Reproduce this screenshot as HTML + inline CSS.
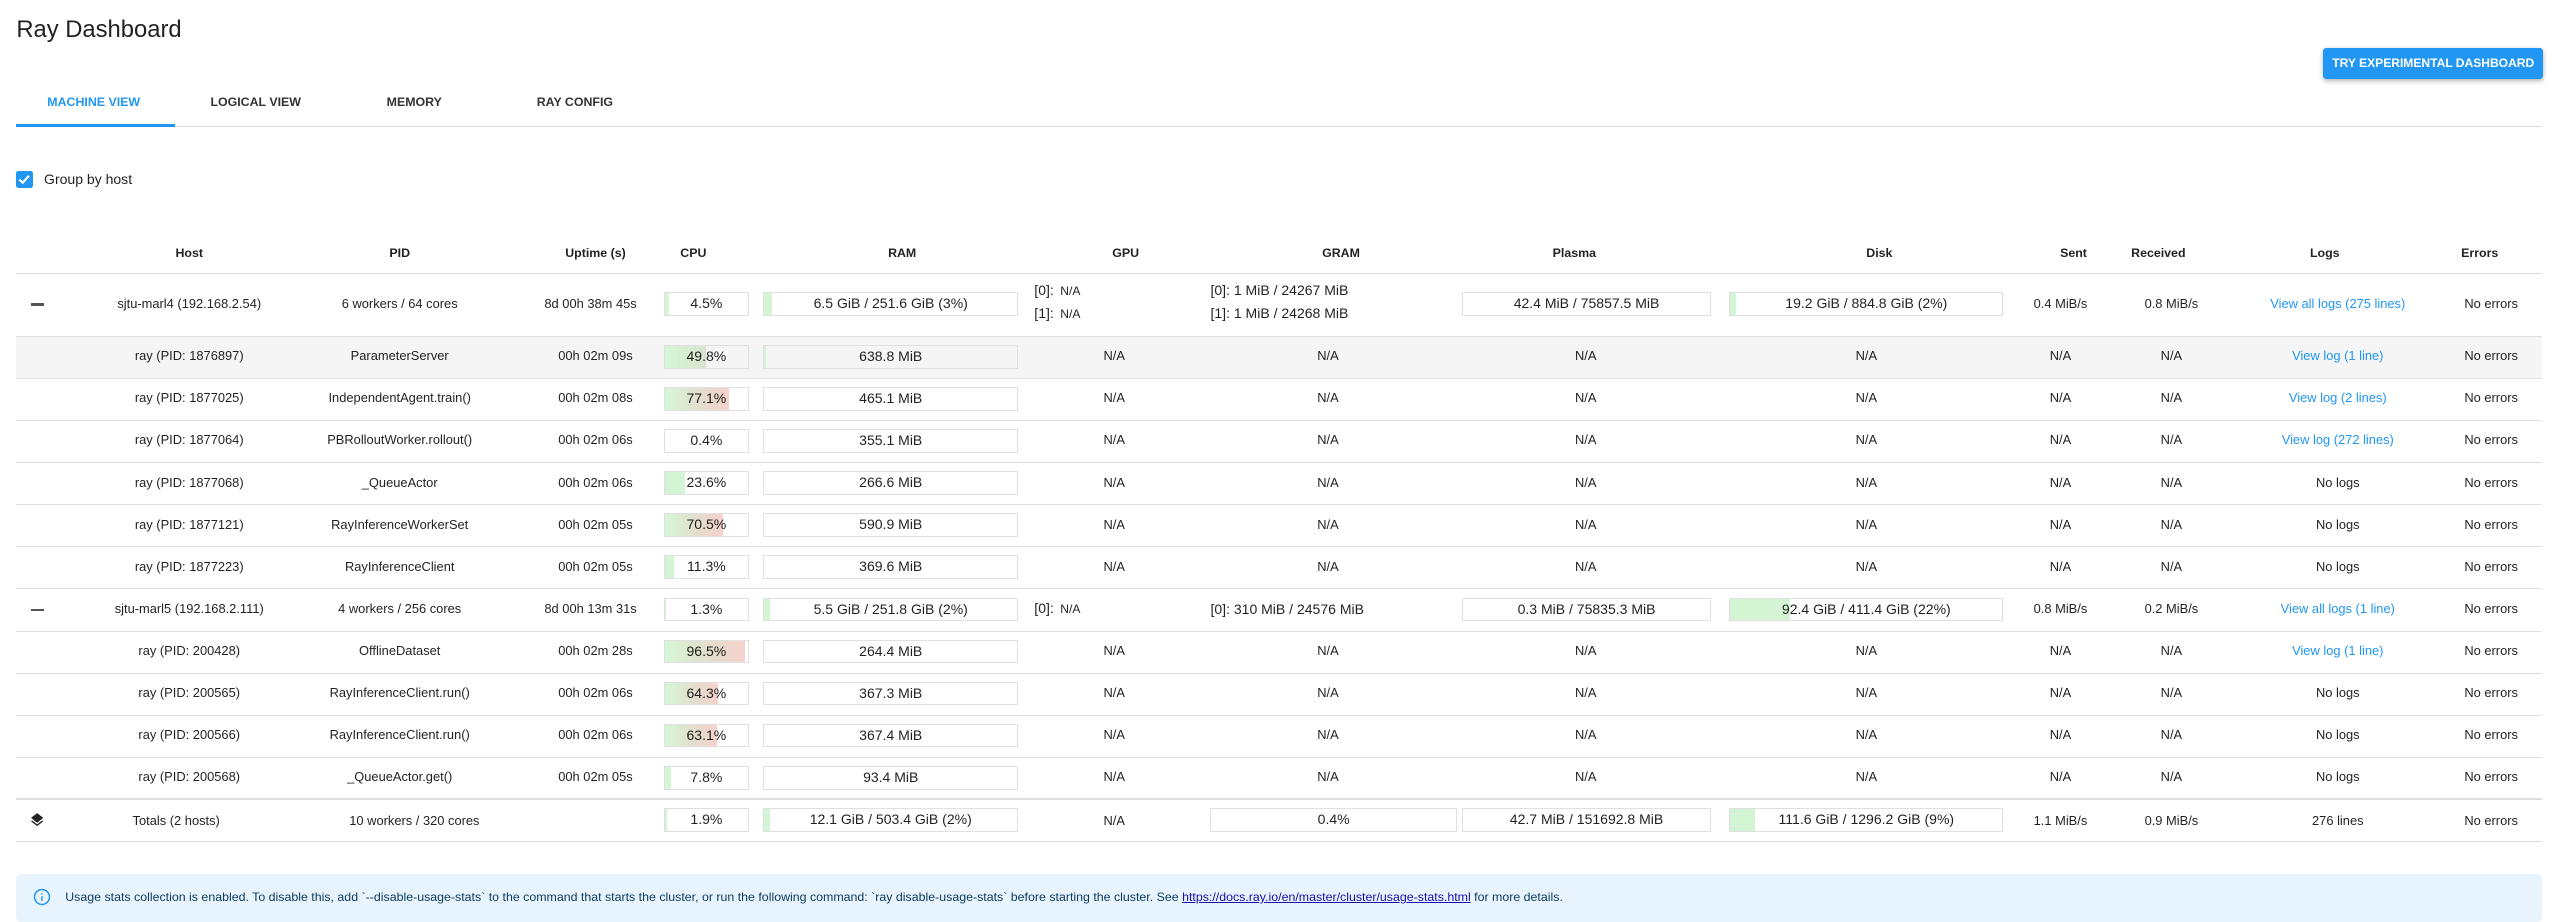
<!DOCTYPE html>
<html><head><meta charset="utf-8"><style>
html,body{margin:0;padding:0;background:#fff;}
body{width:1568px;height:565px;zoom:1.6314;position:relative;overflow:hidden;font-family:"Liberation Sans",sans-serif;color:rgba(0,0,0,0.87);}
.a{position:absolute;}
.t{position:absolute;white-space:nowrap;text-align:center;width:200px;margin-left:-100px;font-size:7.9px;line-height:10px;}
.row{position:absolute;left:10px;width:1548px;border-bottom:1px solid #e0e0e0;box-sizing:border-box;}
.box{position:absolute;height:14.5px;border:1px solid #e0e0e0;box-sizing:border-box;background:#fff;font-size:8.6px;line-height:12.5px;text-align:center;white-space:nowrap;overflow:hidden;}
.box .f{position:absolute;left:0;top:0;bottom:0;}
.box span{position:relative;}
.hd{font-weight:bold;font-size:7.6px;}
.link{color:#2196f3;}
.g{background:#d4f5d4;}
.cg{background:linear-gradient(to right,#d6f7d6,#e4dccd 60%,#f5d2cd);}
</style></head><body>

<div class="a" style="left:10px;top:9px;font-size:14.6px;line-height:18px;">Ray Dashboard</div>

<div class="a" style="left:1424px;top:29.4px;width:135px;height:19px;background:#2196f3;border-radius:2px;box-shadow:0 1px 3px rgba(0,0,0,0.3);color:#fff;font-size:7.4px;line-height:19px;text-align:center;font-weight:bold;white-space:nowrap;">TRY EXPERIMENTAL DASHBOARD</div>

<div class="a" style="left:10px;top:77px;width:1548px;height:1px;background:#e0e0e0;"></div>
<div class="a" style="left:10px;top:76px;width:97px;height:2px;background:#2196f3;"></div>
<div class="a" style="left:29px;top:58px;font-size:7.6px;font-weight:bold;color:#2196f3;">MACHINE VIEW</div>
<div class="a" style="left:129px;top:58px;font-size:7.6px;font-weight:bold;color:#333;">LOGICAL VIEW</div>
<div class="a" style="left:237px;top:58px;font-size:7.6px;font-weight:bold;color:#333;">MEMORY</div>
<div class="a" style="left:329px;top:58px;font-size:7.6px;font-weight:bold;color:#333;">RAY CONFIG</div>

<div class="a" style="left:10px;top:105px;width:10px;height:10px;background:#2196f3;border-radius:1.5px;"></div>
<svg class="a" style="left:10px;top:105px" width="10" height="10" viewBox="0 0 10 10"><path d="M2 5.2 L4.1 7.2 L8 2.9" stroke="#fff" stroke-width="1.3" fill="none"/></svg>
<div class="a" style="left:27px;top:105px;font-size:8.6px;line-height:10px;">Group by host</div>

<!-- header -->
<div class="row" style="top:140px;height:28px;"></div>
<div class="t hd" style="left:116px;top:150px;">Host</div>
<div class="t hd" style="left:245px;top:150px;">PID</div>
<div class="t hd" style="left:365px;top:150px;">Uptime (s)</div>
<div class="t hd" style="left:425px;top:150px;">CPU</div>
<div class="t hd" style="left:553px;top:150px;">RAM</div>
<div class="t hd" style="left:690px;top:150px;">GPU</div>
<div class="t hd" style="left:822px;top:150px;">GRAM</div>
<div class="t hd" style="left:965px;top:150px;">Plasma</div>
<div class="t hd" style="left:1152px;top:150px;">Disk</div>
<div class="t hd" style="left:1271px;top:150px;">Sent</div>
<div class="t hd" style="left:1323px;top:150px;">Received</div>
<div class="t hd" style="left:1425px;top:150px;">Logs</div>
<div class="t hd" style="left:1520px;top:150px;">Errors</div>

<!-- host 1 -->
<div class="row" style="top:168px;height:38.5px;"></div>
<div class="a" style="left:19px;top:186px;width:8px;height:1.3px;background:#555;"></div>
<div class="t" style="left:116px;top:181.5px;">sjtu-marl4 (192.168.2.54)</div>
<div class="t" style="left:245px;top:181.5px;">6 workers / 64 cores</div>
<div class="t" style="left:362px;top:181.5px;">8d 00h 38m 45s</div>
<div class="box" style="left:407px;top:179px;width:52px;"><div class="f g" style="width:4.5%"></div><span>4.5%</span></div>
<div class="box" style="left:468px;top:179px;width:156px;"><div class="f g" style="width:3%"></div><span>6.5 GiB / 251.6 GiB (3%)</span></div>
<div class="a" style="left:634px;top:173px;font-size:8.6px;line-height:10px;">[0]:<span style="font-size:7.4px;margin-left:4px;">N/A</span></div>
<div class="a" style="left:634px;top:187px;font-size:8.6px;line-height:10px;">[1]:<span style="font-size:7.4px;margin-left:4px;">N/A</span></div>
<div class="a" style="left:742px;top:173px;font-size:8.6px;line-height:10px;">[0]: 1 MiB / 24267 MiB</div>
<div class="a" style="left:742px;top:187px;font-size:8.6px;line-height:10px;">[1]: 1 MiB / 24268 MiB</div>
<div class="box" style="left:896px;top:179px;width:153px;"><span>42.4 MiB / 75857.5 MiB</span></div>
<div class="box" style="left:1060px;top:179px;width:168px;"><div class="f g" style="width:2%"></div><span>19.2 GiB / 884.8 GiB (2%)</span></div>
<div class="t" style="left:1263px;top:181.5px;">0.4 MiB/s</div>
<div class="t" style="left:1331px;top:181.5px;">0.8 MiB/s</div>
<div class="t link" style="left:1433px;top:181.5px;">View all logs (275 lines)</div>
<div class="t" style="left:1527px;top:181.5px;">No errors</div>

<!-- child rows host1 -->
<div class="row" style="top:206.5px;height:25.8px;background:#f5f5f5;"></div>
<div class="t" style="left:116px;top:213.5px;">ray (PID: 1876897)</div>
<div class="t" style="left:245px;top:213.5px;">ParameterServer</div>
<div class="t" style="left:365px;top:213.5px;">00h 02m 09s</div>
<div class="box" style="left:407px;top:211.5px;width:52px;background:#f5f5f5"><div class="f cg" style="width:49.8%;background:linear-gradient(to right,#d6f7d6,#d9e3cd)"></div><span>49.8%</span></div>
<div class="box" style="left:468px;top:211.5px;width:156px;background:#f5f5f5"><div class="f g" style="width:0.5%"></div><span>638.8 MiB</span></div>
<div class="t" style="left:683px;top:213.5px;">N/A</div><div class="t" style="left:814px;top:213.5px;">N/A</div><div class="t" style="left:972px;top:213.5px;">N/A</div><div class="t" style="left:1144px;top:213.5px;">N/A</div><div class="t" style="left:1263px;top:213.5px;">N/A</div><div class="t" style="left:1331px;top:213.5px;">N/A</div>
<div class="t link" style="left:1433px;top:213.5px;">View log (1 line)</div><div class="t" style="left:1527px;top:213.5px;">No errors</div>

<div class="row" style="top:232.3px;height:25.8px;"></div>
<div class="t" style="left:116px;top:239.3px;">ray (PID: 1877025)</div>
<div class="t" style="left:245px;top:239.3px;">IndependentAgent.train()</div>
<div class="t" style="left:365px;top:239.3px;">00h 02m 08s</div>
<div class="box" style="left:407px;top:237.3px;width:52px;"><div class="f cg" style="width:77.1%"></div><span>77.1%</span></div>
<div class="box" style="left:468px;top:237.3px;width:156px;"><span>465.1 MiB</span></div>
<div class="t" style="left:683px;top:239.3px;">N/A</div><div class="t" style="left:814px;top:239.3px;">N/A</div><div class="t" style="left:972px;top:239.3px;">N/A</div><div class="t" style="left:1144px;top:239.3px;">N/A</div><div class="t" style="left:1263px;top:239.3px;">N/A</div><div class="t" style="left:1331px;top:239.3px;">N/A</div>
<div class="t link" style="left:1433px;top:239.3px;">View log (2 lines)</div><div class="t" style="left:1527px;top:239.3px;">No errors</div>

<div class="row" style="top:258.1px;height:25.8px;"></div>
<div class="t" style="left:116px;top:265.1px;">ray (PID: 1877064)</div>
<div class="t" style="left:245px;top:265.1px;">PBRolloutWorker.rollout()</div>
<div class="t" style="left:365px;top:265.1px;">00h 02m 06s</div>
<div class="box" style="left:407px;top:263.1px;width:52px;"><span>0.4%</span></div>
<div class="box" style="left:468px;top:263.1px;width:156px;"><span>355.1 MiB</span></div>
<div class="t" style="left:683px;top:265.1px;">N/A</div><div class="t" style="left:814px;top:265.1px;">N/A</div><div class="t" style="left:972px;top:265.1px;">N/A</div><div class="t" style="left:1144px;top:265.1px;">N/A</div><div class="t" style="left:1263px;top:265.1px;">N/A</div><div class="t" style="left:1331px;top:265.1px;">N/A</div>
<div class="t link" style="left:1433px;top:265.1px;">View log (272 lines)</div><div class="t" style="left:1527px;top:265.1px;">No errors</div>

<div class="row" style="top:283.9px;height:25.8px;"></div>
<div class="t" style="left:116px;top:290.9px;">ray (PID: 1877068)</div>
<div class="t" style="left:245px;top:290.9px;">_QueueActor</div>
<div class="t" style="left:365px;top:290.9px;">00h 02m 06s</div>
<div class="box" style="left:407px;top:288.9px;width:52px;"><div class="f g" style="width:23.6%"></div><span>23.6%</span></div>
<div class="box" style="left:468px;top:288.9px;width:156px;"><span>266.6 MiB</span></div>
<div class="t" style="left:683px;top:290.9px;">N/A</div><div class="t" style="left:814px;top:290.9px;">N/A</div><div class="t" style="left:972px;top:290.9px;">N/A</div><div class="t" style="left:1144px;top:290.9px;">N/A</div><div class="t" style="left:1263px;top:290.9px;">N/A</div><div class="t" style="left:1331px;top:290.9px;">N/A</div>
<div class="t" style="left:1433px;top:290.9px;">No logs</div><div class="t" style="left:1527px;top:290.9px;">No errors</div>

<div class="row" style="top:309.7px;height:25.8px;"></div>
<div class="t" style="left:116px;top:316.7px;">ray (PID: 1877121)</div>
<div class="t" style="left:245px;top:316.7px;">RayInferenceWorkerSet</div>
<div class="t" style="left:365px;top:316.7px;">00h 02m 05s</div>
<div class="box" style="left:407px;top:314.7px;width:52px;"><div class="f cg" style="width:70.5%"></div><span>70.5%</span></div>
<div class="box" style="left:468px;top:314.7px;width:156px;"><span>590.9 MiB</span></div>
<div class="t" style="left:683px;top:316.7px;">N/A</div><div class="t" style="left:814px;top:316.7px;">N/A</div><div class="t" style="left:972px;top:316.7px;">N/A</div><div class="t" style="left:1144px;top:316.7px;">N/A</div><div class="t" style="left:1263px;top:316.7px;">N/A</div><div class="t" style="left:1331px;top:316.7px;">N/A</div>
<div class="t" style="left:1433px;top:316.7px;">No logs</div><div class="t" style="left:1527px;top:316.7px;">No errors</div>

<div class="row" style="top:335.5px;height:25.8px;"></div>
<div class="t" style="left:116px;top:342.5px;">ray (PID: 1877223)</div>
<div class="t" style="left:245px;top:342.5px;">RayInferenceClient</div>
<div class="t" style="left:365px;top:342.5px;">00h 02m 05s</div>
<div class="box" style="left:407px;top:340.5px;width:52px;"><div class="f g" style="width:11.3%"></div><span>11.3%</span></div>
<div class="box" style="left:468px;top:340.5px;width:156px;"><span>369.6 MiB</span></div>
<div class="t" style="left:683px;top:342.5px;">N/A</div><div class="t" style="left:814px;top:342.5px;">N/A</div><div class="t" style="left:972px;top:342.5px;">N/A</div><div class="t" style="left:1144px;top:342.5px;">N/A</div><div class="t" style="left:1263px;top:342.5px;">N/A</div><div class="t" style="left:1331px;top:342.5px;">N/A</div>
<div class="t" style="left:1433px;top:342.5px;">No logs</div><div class="t" style="left:1527px;top:342.5px;">No errors</div>

<!-- host 2 -->
<div class="row" style="top:361.3px;height:25.8px;"></div>
<div class="a" style="left:19px;top:373.5px;width:8px;height:1.3px;background:#555;"></div>
<div class="t" style="left:116px;top:368.3px;">sjtu-marl5 (192.168.2.111)</div>
<div class="t" style="left:245px;top:368.3px;">4 workers / 256 cores</div>
<div class="t" style="left:362px;top:368.3px;">8d 00h 13m 31s</div>
<div class="box" style="left:407px;top:366.3px;width:52px;"><div class="f g" style="width:1.3%"></div><span>1.3%</span></div>
<div class="box" style="left:468px;top:366.3px;width:156px;"><div class="f g" style="width:2%"></div><span>5.5 GiB / 251.8 GiB (2%)</span></div>
<div class="a" style="left:634px;top:367.5px;font-size:8.6px;line-height:10px;">[0]:<span style="font-size:7.4px;margin-left:4px;">N/A</span></div>
<div class="a" style="left:742px;top:368.3px;font-size:8.6px;line-height:10px;">[0]: 310 MiB / 24576 MiB</div>
<div class="box" style="left:896px;top:366.3px;width:153px;"><span>0.3 MiB / 75835.3 MiB</span></div>
<div class="box" style="left:1060px;top:366.3px;width:168px;"><div class="f g" style="width:22%"></div><span>92.4 GiB / 411.4 GiB (22%)</span></div>
<div class="t" style="left:1263px;top:368.3px;">0.8 MiB/s</div>
<div class="t" style="left:1331px;top:368.3px;">0.2 MiB/s</div>
<div class="t link" style="left:1433px;top:368.3px;">View all logs (1 line)</div>
<div class="t" style="left:1527px;top:368.3px;">No errors</div>

<div class="row" style="top:387.1px;height:25.8px;"></div>
<div class="t" style="left:116px;top:394.1px;">ray (PID: 200428)</div>
<div class="t" style="left:245px;top:394.1px;">OfflineDataset</div>
<div class="t" style="left:365px;top:394.1px;">00h 02m 28s</div>
<div class="box" style="left:407px;top:392.1px;width:52px;"><div class="f cg" style="width:96.5%"></div><span>96.5%</span></div>
<div class="box" style="left:468px;top:392.1px;width:156px;"><span>264.4 MiB</span></div>
<div class="t" style="left:683px;top:394.1px;">N/A</div><div class="t" style="left:814px;top:394.1px;">N/A</div><div class="t" style="left:972px;top:394.1px;">N/A</div><div class="t" style="left:1144px;top:394.1px;">N/A</div><div class="t" style="left:1263px;top:394.1px;">N/A</div><div class="t" style="left:1331px;top:394.1px;">N/A</div>
<div class="t link" style="left:1433px;top:394.1px;">View log (1 line)</div><div class="t" style="left:1527px;top:394.1px;">No errors</div>

<div class="row" style="top:412.9px;height:25.8px;"></div>
<div class="t" style="left:116px;top:419.9px;">ray (PID: 200565)</div>
<div class="t" style="left:245px;top:419.9px;">RayInferenceClient.run()</div>
<div class="t" style="left:365px;top:419.9px;">00h 02m 06s</div>
<div class="box" style="left:407px;top:417.9px;width:52px;"><div class="f cg" style="width:64.3%"></div><span>64.3%</span></div>
<div class="box" style="left:468px;top:417.9px;width:156px;"><span>367.3 MiB</span></div>
<div class="t" style="left:683px;top:419.9px;">N/A</div><div class="t" style="left:814px;top:419.9px;">N/A</div><div class="t" style="left:972px;top:419.9px;">N/A</div><div class="t" style="left:1144px;top:419.9px;">N/A</div><div class="t" style="left:1263px;top:419.9px;">N/A</div><div class="t" style="left:1331px;top:419.9px;">N/A</div>
<div class="t" style="left:1433px;top:419.9px;">No logs</div><div class="t" style="left:1527px;top:419.9px;">No errors</div>

<div class="row" style="top:438.7px;height:25.8px;"></div>
<div class="t" style="left:116px;top:445.7px;">ray (PID: 200566)</div>
<div class="t" style="left:245px;top:445.7px;">RayInferenceClient.run()</div>
<div class="t" style="left:365px;top:445.7px;">00h 02m 06s</div>
<div class="box" style="left:407px;top:443.7px;width:52px;"><div class="f cg" style="width:63.1%"></div><span>63.1%</span></div>
<div class="box" style="left:468px;top:443.7px;width:156px;"><span>367.4 MiB</span></div>
<div class="t" style="left:683px;top:445.7px;">N/A</div><div class="t" style="left:814px;top:445.7px;">N/A</div><div class="t" style="left:972px;top:445.7px;">N/A</div><div class="t" style="left:1144px;top:445.7px;">N/A</div><div class="t" style="left:1263px;top:445.7px;">N/A</div><div class="t" style="left:1331px;top:445.7px;">N/A</div>
<div class="t" style="left:1433px;top:445.7px;">No logs</div><div class="t" style="left:1527px;top:445.7px;">No errors</div>

<div class="row" style="top:464.5px;height:25.8px;border-bottom:1.5px solid #ddd;"></div>
<div class="t" style="left:116px;top:471.5px;">ray (PID: 200568)</div>
<div class="t" style="left:245px;top:471.5px;">_QueueActor.get()</div>
<div class="t" style="left:365px;top:471.5px;">00h 02m 05s</div>
<div class="box" style="left:407px;top:469.5px;width:52px;"><div class="f g" style="width:7.8%"></div><span>7.8%</span></div>
<div class="box" style="left:468px;top:469.5px;width:156px;"><span>93.4 MiB</span></div>
<div class="t" style="left:683px;top:471.5px;">N/A</div><div class="t" style="left:814px;top:471.5px;">N/A</div><div class="t" style="left:972px;top:471.5px;">N/A</div><div class="t" style="left:1144px;top:471.5px;">N/A</div><div class="t" style="left:1263px;top:471.5px;">N/A</div><div class="t" style="left:1331px;top:471.5px;">N/A</div>
<div class="t" style="left:1433px;top:471.5px;">No logs</div><div class="t" style="left:1527px;top:471.5px;">No errors</div>

<!-- totals -->
<div class="row" style="top:490.3px;height:26px;"></div>
<svg class="a" style="left:18px;top:497px" width="10" height="11" viewBox="0 0 24 24"><path d="M11.99 18.54l-7.37-5.73L3 14.07l9 7 9-7-1.63-1.27-7.38 5.74zM12 16l7.36-5.73L21 9l-9-7-9 7 1.63 1.27L12 16z" fill="#222"/></svg>
<div class="t" style="left:108px;top:498.5px;">Totals (2 hosts)</div>
<div class="t" style="left:254px;top:498.5px;">10 workers / 320 cores</div>
<div class="box" style="left:407px;top:495.5px;width:52px;"><div class="f g" style="width:1.9%"></div><span>1.9%</span></div>
<div class="box" style="left:468px;top:495.5px;width:156px;"><div class="f g" style="width:2%"></div><span>12.1 GiB / 503.4 GiB (2%)</span></div>
<div class="t" style="left:683px;top:498.5px;">N/A</div>
<div class="box" style="left:742px;top:495.5px;width:151px;"><span>0.4%</span></div>
<div class="box" style="left:896px;top:495.5px;width:153px;"><span>42.7 MiB / 151692.8 MiB</span></div>
<div class="box" style="left:1060px;top:495.5px;width:168px;"><div class="f g" style="width:9%"></div><span>111.6 GiB / 1296.2 GiB (9%)</span></div>
<div class="t" style="left:1263px;top:498.5px;">1.1 MiB/s</div>
<div class="t" style="left:1331px;top:498.5px;">0.9 MiB/s</div>
<div class="t" style="left:1433px;top:498.5px;">276 lines</div>
<div class="t" style="left:1527px;top:498.5px;">No errors</div>

<!-- banner -->
<div class="a" style="left:10px;top:536px;width:1548px;height:29px;background:#e8f4fd;border-radius:3px;"></div>
<svg class="a" style="left:20px;top:544.5px" width="11" height="11" viewBox="0 0 24 24"><circle cx="12" cy="12" r="10" stroke="#2196f3" stroke-width="2" fill="none"/><path d="M12 11v6M12 7v1.5" stroke="#2196f3" stroke-width="2"/></svg>
<div class="a" style="left:40px;top:545px;font-size:7.6px;line-height:10px;white-space:nowrap;color:#0d3c61;">Usage stats collection is enabled. To disable this, add `--disable-usage-stats` to the command that starts the cluster, or run the following command: `ray disable-usage-stats` before starting the cluster. See <span style="color:#1a0dab;text-decoration:underline;">https://docs.ray.io/en/master/cluster/usage-stats.html</span> for more details.</div>

</body></html>
